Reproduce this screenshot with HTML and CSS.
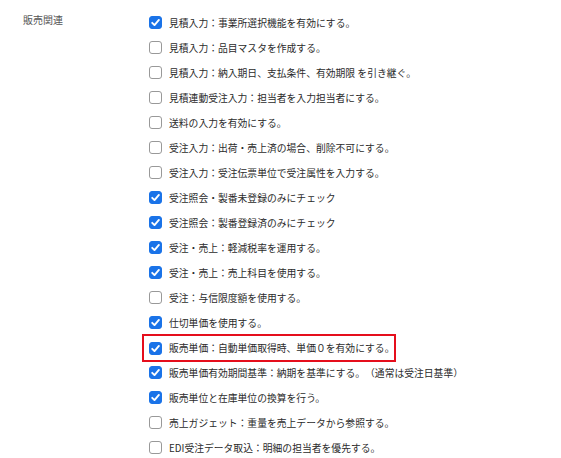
FILE: index.html
```html
<!DOCTYPE html>
<html lang="ja">
<head>
<meta charset="utf-8">
<link rel="stylesheet" href="styles.css">
</head>
<body>
<div class="section">
  <div class="label">販売関連</div>
  <ul class="options">
    <li class="opt"><span class="cb on"><svg viewBox="0 0 13 13"><path d="M3.2 6.8 L5.5 9.1 L9.9 3.9" /></svg></span><span class="txt">見積入力：事業所選択機能を有効にする。</span></li>
    <li class="opt"><span class="cb"></span><span class="txt">見積入力：品目マスタを作成する。</span></li>
    <li class="opt"><span class="cb"></span><span class="txt">見積入力：納入期日、支払条件、有効期限 を引き継ぐ。</span></li>
    <li class="opt"><span class="cb"></span><span class="txt">見積連動受注入力：担当者を入力担当者にする。</span></li>
    <li class="opt"><span class="cb"></span><span class="txt">送料の入力を有効にする。</span></li>
    <li class="opt"><span class="cb"></span><span class="txt">受注入力：出荷・売上済の場合、削除不可にする。</span></li>
    <li class="opt"><span class="cb"></span><span class="txt">受注入力：受注伝票単位で受注属性を入力する。</span></li>
    <li class="opt"><span class="cb on"><svg viewBox="0 0 13 13"><path d="M3.2 6.8 L5.5 9.1 L9.9 3.9" /></svg></span><span class="txt">受注照会・製番未登録のみにチェック</span></li>
    <li class="opt"><span class="cb on"><svg viewBox="0 0 13 13"><path d="M3.2 6.8 L5.5 9.1 L9.9 3.9" /></svg></span><span class="txt">受注照会：製番登録済のみにチェック</span></li>
    <li class="opt"><span class="cb on"><svg viewBox="0 0 13 13"><path d="M3.2 6.8 L5.5 9.1 L9.9 3.9" /></svg></span><span class="txt">受注・売上：軽減税率を運用する。</span></li>
    <li class="opt"><span class="cb on"><svg viewBox="0 0 13 13"><path d="M3.2 6.8 L5.5 9.1 L9.9 3.9" /></svg></span><span class="txt">受注・売上：売上科目を使用する。</span></li>
    <li class="opt"><span class="cb"></span><span class="txt">受注：与信限度額を使用する。</span></li>
    <li class="opt"><span class="cb on"><svg viewBox="0 0 13 13"><path d="M3.2 6.8 L5.5 9.1 L9.9 3.9" /></svg></span><span class="txt">仕切単価を使用する。</span></li>
    <li class="opt hl"><span class="cb on"><svg viewBox="0 0 13 13"><path d="M3.2 6.8 L5.5 9.1 L9.9 3.9" /></svg></span><span class="txt">販売単価：自動単価取得時、単価０を有効にする。</span></li>
    <li class="opt"><span class="cb on"><svg viewBox="0 0 13 13"><path d="M3.2 6.8 L5.5 9.1 L9.9 3.9" /></svg></span><span class="txt">販売単価有効期間基準：納期を基準にする。（通常は受注日基準）</span></li>
    <li class="opt"><span class="cb on"><svg viewBox="0 0 13 13"><path d="M3.2 6.8 L5.5 9.1 L9.9 3.9" /></svg></span><span class="txt">販売単位と在庫単位の換算を行う。</span></li>
    <li class="opt"><span class="cb"></span><span class="txt">売上ガジェット：重量を売上データから参照する。</span></li>
    <li class="opt"><span class="cb"></span><span class="txt">EDI受注データ取込：明細の担当者を優先する。</span></li>
  </ul>
</div>
</body>
</html>
```

FILE: styles.css
```css
html, body {
  margin: 0;
  padding: 0;
  background: #ffffff;
}
body {
  font-family: "Noto Sans CJK JP", "Noto Sans", sans-serif;
  color: #2b2b2b;
  width: 561px;
  height: 458px;
  overflow: hidden;
  text-spacing-trim: space-all;
}
.section {
  display: flex;
  align-items: flex-start;
}
.label {
  width: 126px;
  padding: 13px 0 0 23px;
  font-size: 10px;
  line-height: 14px;
  color: #555555;
}
.options {
  list-style: none;
  margin: 0;
  padding: 10px 0 0 0;
}
.opt {
  display: flex;
  align-items: center;
  height: 25px;
  font-size: 9.8px;
  white-space: nowrap;
}
.cb {
  box-sizing: border-box;
  width: 13px;
  height: 13px;
  border: 1px solid #999999;
  border-radius: 3px;
  margin-right: 7px;
  flex: none;
  background: #fff;
  display: flex;
}
.cb.on {
  background: #1a73e8;
  border-color: #1a73e8;
}
.cb svg {
  width: 13px;
  height: 13px;
  margin: -1px;
}
.cb svg path {
  fill: none;
  stroke: #ffffff;
  stroke-width: 1.9;
  stroke-linecap: round;
  stroke-linejoin: round;
}
.opt.hl {
  box-sizing: border-box;
  width: 254px;
  height: 28px;
  margin: -1px 0 -2px -7px;
  padding: 0 5px;
  border: 2px solid #e50e1c;
}
```
